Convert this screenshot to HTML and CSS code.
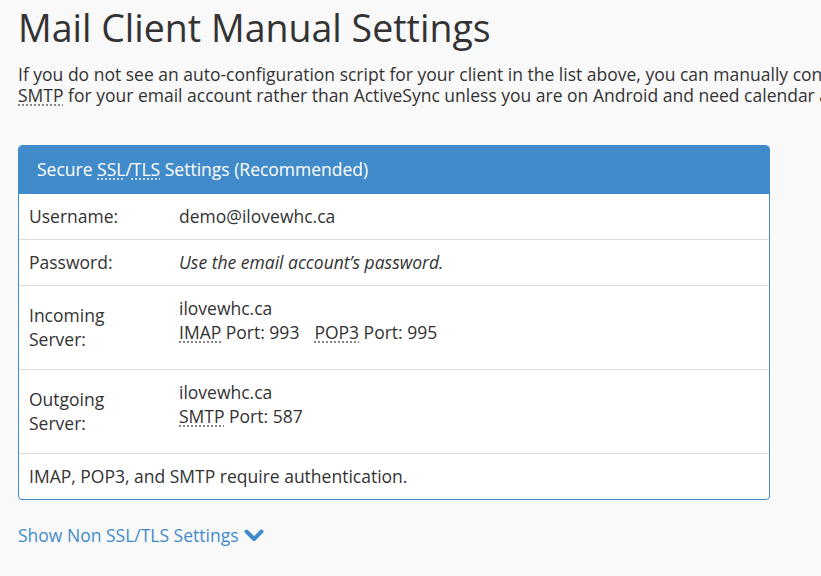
FILE: index.html
```html
<!DOCTYPE html>
<html lang="en">
<head>
<meta charset="utf-8">
<title>Mail Client Manual Settings</title>
<link rel="stylesheet" href="styles.css">
</head>
<body>
<div class="page">
  <h1 class="title">Mail Client Manual Settings</h1>
  <p class="intro">If you do not see an auto-configuration script for your client in the list above, you can manually configure your mail client. We recommend that you use IMAP or POP3 and<br><abbr title="Simple Mail Transfer Protocol">SMTP</abbr> for your email account rather than ActiveSync unless you are on Android and need calendar and contacts synchronization.</p>

  <section class="panel">
    <div class="panel-heading">Secure <abbr title="Secure Sockets Layer">SSL</abbr>/<abbr title="Transport Layer Security">TLS</abbr> Settings (Recommended)</div>
    <div class="panel-body">
      <div class="row">
        <div class="label">Username:</div>
        <div class="value">demo@ilovewhc.ca</div>
      </div>
      <div class="row">
        <div class="label">Password:</div>
        <div class="value"><em>Use the email account’s password.</em></div>
      </div>
      <div class="row">
        <div class="label">Incoming<br>Server:</div>
        <div class="value">
          <div>ilovewhc.ca</div>
          <div class="ports"><span class="port"><abbr title="Internet Message Access Protocol">IMAP</abbr> Port: 993</span><span class="port"><abbr title="Post Office Protocol 3">POP3</abbr> Port: 995</span></div>
        </div>
      </div>
      <div class="row">
        <div class="label">Outgoing<br>Server:</div>
        <div class="value">
          <div>ilovewhc.ca</div>
          <div class="ports"><span class="port"><abbr title="Simple Mail Transfer Protocol">SMTP</abbr> Port: 587</span></div>
        </div>
      </div>
      <div class="row">
        <div class="note">IMAP, POP3, and SMTP require authentication.</div>
      </div>
    </div>
  </section>

  <a class="toggle" href="#">Show Non SSL/TLS Settings <svg class="chev" viewBox="0 0 20 13" width="20" height="13" aria-hidden="true"><polyline points="2.5,2.5 10,10 17.5,2.5" fill="none" stroke="currentColor" stroke-width="4" stroke-linecap="round" stroke-linejoin="round"/></svg></a>
</div>
</body>
</html>
```

FILE: styles.css
```css
html {
  overflow: hidden;
}
body {
  margin: 0;
  background: #f9f9f9;
  color: #333;
  font-family: "Open Sans", "Liberation Sans", sans-serif;
  font-size: 17.5px;
  line-height: 24px;
}
.page {
  padding: 0 18px;
}
.title {
  margin: 6px 0 0;
  font-size: 37.5px;
  line-height: 44px;
  font-weight: 400;
  color: #333;
}
.intro {
  margin: 14px 0 0;
  line-height: 21px;
  white-space: nowrap;
}
abbr[title] {
  text-decoration: underline dotted #777;
  text-underline-offset: 3px;
  cursor: help;
}
.panel {
  margin-top: 39px;
  width: 752px;
  box-sizing: border-box;
  border: 1px solid #428bca;
  border-radius: 4px;
  background: #fff;
  overflow: hidden;
}
.panel-heading {
  background: #428bca;
  color: #fff;
  padding: 12px 19px 13px;
  margin: -1px -1px 0;
}
.panel-heading abbr[title] {
  text-decoration-color: rgba(255,255,255,0.8);
}
.row {
  display: grid;
  grid-template-columns: 150px 1fr;
  border-top: 1px solid #ddd;
}
.row:first-child {
  border-top: 0;
}
.label {
  padding: 10px 10px 11px;
  align-self: center;
}
.value {
  padding: 10px 10px 11px;
}
.ports {
  margin-bottom: 14px;
}
.port + .port {
  margin-left: 15px;
}
.note {
  grid-column: 1 / -1;
  padding: 10px 10px 11px;
}
.toggle {
  display: inline-flex;
  align-items: center;
  gap: 5px;
  margin-top: 23px;
  color: #428bca;
  text-decoration: none;
}
.chev {
  margin-top: 1px;
}
```
